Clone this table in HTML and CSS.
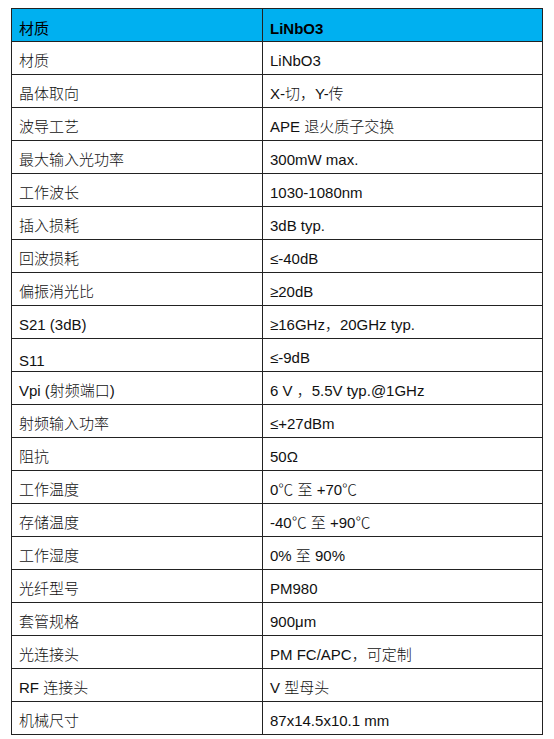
FILE: index.html
```html
<!DOCTYPE html>
<html lang="zh-CN">
<head>
<meta charset="utf-8">
<title>LiNbO3 参数</title>
<link rel="stylesheet" href="styles.css">
</head>
<body>
<table class="spec">
  <colgroup><col class="c1"><col class="c2"></colgroup>
  <thead>
    <tr class="head"><th class="h-name">材质</th><th class="h-val">LiNbO3</th></tr>
  </thead>
  <tbody>
    <tr><td>材质</td><td>LiNbO3</td></tr>
    <tr><td>晶体取向</td><td>X-切，Y-传</td></tr>
    <tr><td>波导工艺</td><td>APE 退火质子交换</td></tr>
    <tr><td>最大输入光功率</td><td>300mW max.</td></tr>
    <tr><td>工作波长</td><td>1030-1080nm</td></tr>
    <tr><td>插入损耗</td><td>3dB typ.</td></tr>
    <tr><td>回波损耗</td><td>≤-40dB</td></tr>
    <tr><td>偏振消光比</td><td>≥20dB</td></tr>
    <tr><td>S21 (3dB)</td><td>≥16GHz，20GHz typ.</td></tr>
    <tr><td class="low">S11</td><td>≤-9dB</td></tr>
    <tr><td>Vpi (射频端口)</td><td>6 V ，5.5V typ.@1GHz</td></tr>
    <tr><td>射频输入功率</td><td>≤+27dBm</td></tr>
    <tr><td>阻抗</td><td>50Ω</td></tr>
    <tr><td>工作温度</td><td>0℃ 至 +70℃</td></tr>
    <tr><td>存储温度</td><td>-40℃ 至 +90℃</td></tr>
    <tr><td>工作湿度</td><td>0% 至 90%</td></tr>
    <tr><td>光纤型号</td><td>PM980</td></tr>
    <tr><td>套管规格</td><td>900μm</td></tr>
    <tr><td>光连接头</td><td>PM FC/APC，可定制</td></tr>
    <tr><td>RF 连接头</td><td>V 型母头</td></tr>
    <tr><td>机械尺寸</td><td>87x14.5x10.1 mm</td></tr>
  </tbody>
</table>
</body>
</html>
```
FILE: styles.css
```css
html, body {
  margin: 0;
  background: #ffffff;
}
body {
  padding: 8px 0 0 11px;
  font-family: "Liberation Sans", Arial, "Noto Sans CJK SC", sans-serif;
  font-size: 15px;
  color: #000;
}
.spec {
  border-collapse: collapse;
  width: 531px;
  table-layout: fixed;
}
.c1 { width: 251px; }
.c2 { width: 280px; }
.spec tr {
  height: 33px;
}
.spec th,
.spec td {
  border: 1px solid #222;
  padding: 0 6px 4px 7px;
  vertical-align: bottom;
  text-align: left;
  line-height: 18px;
  font-weight: 300;
  white-space: nowrap;
}
.spec td {
  color: #111;
}
.head th {
  background: #00b0f0;
  padding-bottom: 3px;
}
.head .h-name {
  font-weight: 400;
}
.head .h-val {
  font-weight: 700;
}
.spec td.low {
  padding-bottom: 1px;
}
```
